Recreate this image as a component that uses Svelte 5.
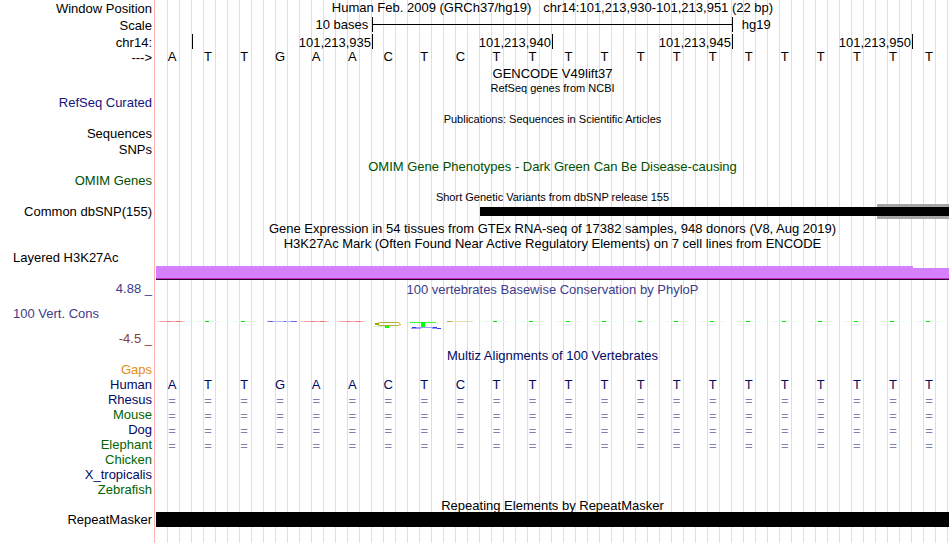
<script lang="ts">
	const sequence = 'ATTGAACTCTTTTTTTTTTTTT'.split('');

	// each tick closes a span of bases
	const ticks = [
		{ span: 1, label: '' },
		{ span: 5, label: '101,213,935' },
		{ span: 5, label: '101,213,940' },
		{ span: 5, label: '101,213,945' },
		{ span: 5, label: '101,213,950' }
	];

	const species = [
		{ name: 'Rhesus', color: 'navy', aligned: true },
		{ name: 'Mouse', color: 'green', aligned: true },
		{ name: 'Dog', color: 'navy', aligned: true },
		{ name: 'Elephant', color: 'green', aligned: true },
		{ name: 'Chicken', color: 'green', aligned: false },
		{ name: 'X_tropicalis', color: 'navy', aligned: false },
		{ name: 'Zebrafish', color: 'green', aligned: false }
	];
</script>

<svelte:head>
	<title>chr14:101,213,930-101,213,951</title>
</svelte:head>

<main class="browser">
	<div class="row tall">
		<div class="label low">Window Position</div>
		<div class="track title position">
			<span>Human Feb. 2009 (GRCh37/hg19)</span>
			<span>chr14:101,213,930-101,213,951 (22 bp)</span>
		</div>
	</div>
	<div class="row tall">
		<div class="label low">Scale</div>
		<div class="track bases">
			<span class="scale-size">10 bases</span>
			<div class="scale-bar"><i></i></div>
			<span class="scale-db">hg19</span>
		</div>
	</div>
	<div class="row">
		<div class="label low">chr14:</div>
		<div class="track bases ticks">
			{#each ticks as tick}
				<span class="tick" style="grid-column-end: span {tick.span}">{tick.label}</span>
			{/each}
		</div>
	</div>
	<div class="row tall">
		<div class="label low">---&gt;</div>
		<div class="track bases letters">
			{#each sequence as base}<span>{base}</span>{/each}
		</div>
	</div>

	<div class="row">
		<div class="label"></div>
		<h2 class="track title">GENCODE V49lift37</h2>
	</div>
	<div class="row short">
		<div class="label"></div>
		<h2 class="track title small">RefSeq genes from NCBI</h2>
	</div>
	<div class="row tall">
		<div class="label blue">RefSeq Curated</div>
	</div>
	<div class="row short">
		<div class="label"></div>
		<h2 class="track title small">Publications: Sequences in Scientific Articles</h2>
	</div>
	<div class="row mid">
		<div class="label">Sequences</div>
	</div>
	<div class="row tall">
		<div class="label">SNPs</div>
	</div>
	<div class="row short">
		<div class="label"></div>
		<h2 class="track title omim">OMIM Gene Phenotypes - Dark Green Can Be Disease-causing</h2>
	</div>
	<div class="row tall">
		<div class="label omim">OMIM Genes</div>
	</div>
	<div class="row short">
		<div class="label"></div>
		<h2 class="track title small">Short Genetic Variants from dbSNP release 155</h2>
	</div>
	<div class="row tall">
		<div class="label">Common dbSNP(155)</div>
		<div class="track bases variants">
			<div class="uncertain"></div>
			<div class="variant"></div>
		</div>
	</div>
	<div class="row">
		<div class="label"></div>
		<h2 class="track title">Gene Expression in 54 tissues from GTEx RNA-seq of 17382 samples, 948 donors (V8, Aug 2019)</h2>
	</div>
	<div class="row short">
		<div class="label"></div>
		<h2 class="track title">H3K27Ac Mark (Often Found Near Active Regulatory Elements) on 7 cell lines from ENCODE</h2>
	</div>
	<div class="row signal">
		<div class="label wide">Layered H3K27Ac</div>
		<div class="track bases histone">
			<div class="high"></div>
			<div class="low-end"></div>
		</div>
	</div>

	<div class="row conservation">
		<div class="label scores">
			<span class="phylo">4.88 _</span>
			<span class="phylo wide">100 Vert. Cons</span>
			<span class="negative">-4.5 _</span>
		</div>
		<div class="track">
			<h2 class="title phylo">100 vertebrates Basewise Conservation by PhyloP</h2>
			<div class="bases logo">
				{#each sequence as base, i}
					<svg width="36" height="8" aria-hidden="true">
						{#if i === 6}
							<path d="M30 2.5 28 1.5H10L6 3 10 4.5H28L31 3.5" fill="none" stroke="#b8b030" />
							<rect x="5" y="2" width="4" height="2" fill="#a8a000" />
							<path d="M4 5.5H21" stroke="#c8f8c8" />
							<rect x="15" y="5" width="4" height="2" fill="#0f0" />
						{:else if i === 7}
							<rect x="4" y="1" width="26" height="1" fill="#3f3" />
							<rect x="15" y="1" width="4" height="5" fill="#0f0" />
							<path d="M8 6.5H28" stroke="#99f" />
							<path d="M5 7.5H15M26 7.5H31" stroke="#99f" />
							<path d="M6 6.5H10M27 6.5H31M31 7.5H35" stroke="#33f" />
						{:else if base === 'A'}
							<path d="M3 .5H31" stroke="#fac8c8" />
							<path d="M6 .5H29" stroke="#f3a0a0" />
							<path d="M13 .5H16M22 .5H26" stroke="#e87878" />
						{:else if base === 'G'}
							<path d="M5 .5H35" stroke="#b4b4fa" />
							<path d="M6 .5H11M22 .5H24M29 .5H35" stroke="#6464ee" />
						{:else if base === 'C'}
							<path d="M5 .5H31" stroke="#e2dfb0" />
							<path d="M5 .5H10" stroke="#b4ae40" />
						{:else}
							<path d="M4 .5H30" stroke="#e4fbe4" />
							<path d="M15 .5H19" stroke="#0e0" />
						{/if}
					</svg>
				{/each}
			</div>
		</div>
	</div>

	<div class="row short">
		<div class="label"></div>
		<h2 class="track title navy">Multiz Alignments of 100 Vertebrates</h2>
	</div>
	<div class="row">
		<div class="label gaps">Gaps</div>
	</div>
	<div class="row">
		<div class="label navy">Human</div>
		<div class="track bases letters navy">
			{#each sequence as base}<span>{base}</span>{/each}
		</div>
	</div>
	{#each species as s}
		<div class="row">
			<div class="label {s.color}">{s.name}</div>
			{#if s.aligned}
				<div class="track bases letters aligned low">
					{#each sequence as _}<span>=</span>{/each}
				</div>
			{/if}
		</div>
	{/each}

	<div class="row">
		<div class="label"></div>
		<h2 class="track title low">Repeating Elements by RepeatMasker</h2>
	</div>
	<div class="row last">
		<div class="label">RepeatMasker</div>
		<div class="track"><div class="repeat"></div></div>
	</div>
</main>

<style>
	:global(body) {
		background: #fff;
	}

	.browser {
		position: relative;
		margin-right: 1px;
		overflow: hidden;
		font: 13px/15px "Liberation Sans", Arial, sans-serif;
		color: #000;
	}

	/* guide lines behind every track */
	.browser::before {
		content: '';
		position: absolute;
		inset: 0 0 0 154px;
		border-left: 1px solid #ffb0b0;
		background: repeating-linear-gradient(to right, #dcdcf6 0 1px, transparent 1px 12px) 12px 0 no-repeat;
	}

	.row {
		position: relative;
		display: flex;
		height: 15px;
		white-space: nowrap;
	}

	.short {
		height: 14px;
	}

	.mid {
		height: 16px;
	}

	.tall {
		height: 17px;
	}

	.label {
		flex: none;
		width: 156px;
		padding-right: 4px;
		box-sizing: border-box;
		text-align: right;
	}

	.low {
		padding-top: 1px;
	}

	.wide {
		padding-left: 13px;
		text-align: left;
	}

	.track {
		flex: 1;
		min-width: 0;
	}

	.title {
		margin: 0;
		font-size: 13px;
		font-weight: normal;
		text-align: center;
	}

	.small {
		font-size: 11px;
	}

	.position {
		display: flex;
		justify-content: center;
		gap: 12px;
	}

	.bases {
		display: grid;
		grid-template-columns: repeat(22, minmax(0, 1fr));
	}

	.scale-size {
		grid-column: 1 / 7;
		padding-right: 4px;
		text-align: right;
	}

	.scale-bar {
		grid-column: 7 / 17;
		display: flex;
		align-items: center;
		height: 15px;
		border: solid #000;
		border-width: 0 1px;
		box-sizing: border-box;
	}

	.scale-bar i {
		flex: 1;
		height: 1px;
		background: #000;
	}

	.scale-db {
		grid-column: 17 / 23;
		padding-left: 9px;
	}

	.ticks {
		margin-left: 1px;
	}

	.tick {
		height: 15px;
		padding: 1px 1px 0 0;
		border-right: 1px solid #000;
		box-sizing: border-box;
		text-align: right;
	}

	.letters {
		margin: 0 2px 0 -2px;
		text-align: center;
	}

	.variants {
		height: 15px;
		align-items: center;
	}

	.uncertain {
		grid-area: 1 / 21 / 2 / 23;
		height: 15px;
		background: #a5a5a5;
	}

	.variant {
		grid-area: 1 / 10 / 2 / 23;
		height: 9px;
		background: #000;
	}

	.signal {
		height: 30px;
	}

	.histone {
		align-items: end;
	}

	.high,
	.low-end {
		height: 14px;
		border-bottom: 1px solid #300030;
		box-shadow: inset 0 -1px #c030c8;
		box-sizing: border-box;
		background: #d580ff;
	}

	.high {
		grid-column: 1 / 22;
	}

	.low-end {
		height: 12px;
	}

	.conservation {
		height: 68px;
	}

	.scores {
		display: flex;
		flex-direction: column;
		gap: 10px;
		padding-top: 1px;
	}

	.conservation .title {
		padding-top: 2px;
	}

	.logo {
		margin: 24px 2px 0 -2px;
	}

	.logo svg {
		display: block;
		overflow: visible;
	}

	.last {
		height: 31px;
	}

	.repeat {
		height: 15px;
		background: #000;
	}

	.blue {
		color: #14147d;
	}

	.navy {
		color: #000a64;
	}

	.green {
		color: #006400;
	}

	.omim {
		color: #005000;
	}

	.phylo {
		color: #3c3c8c;
	}

	.negative {
		color: #8c3c3c;
	}

	.gaps {
		color: #e68c14;
	}

	.aligned {
		color: #8080b2;
	}
</style>
